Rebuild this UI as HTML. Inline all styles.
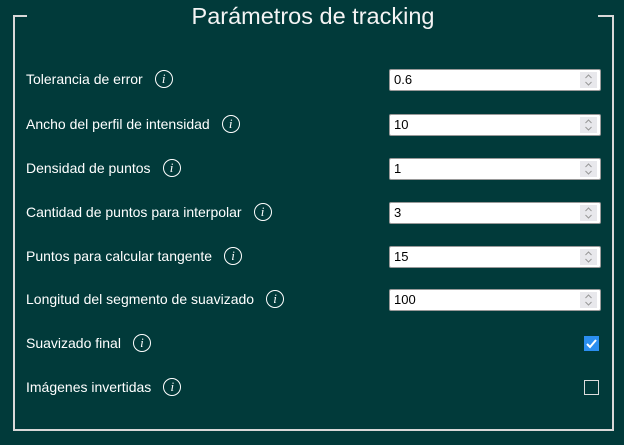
<!DOCTYPE html>
<html><head><meta charset="utf-8"><style>
body{margin:0;width:624px;height:445px;background:#013a3a;font-family:"Liberation Sans",sans-serif;color:#fff;position:relative;overflow:hidden}
.fs{position:absolute;left:13px;top:15px;width:597px;height:414px;border:2px solid #d8d8d8;border-top:none}
.tl{position:absolute;left:13px;top:15px;width:14px;height:2px;background:#d8d8d8}
.tr{position:absolute;left:598px;top:15px;width:14px;height:2px;background:#d8d8d8}
.title{position:absolute;left:0;width:626px;top:3px;text-align:center;font-size:23.5px;color:#f4f4f4}
.row{position:absolute;left:26px;height:20px;display:flex;align-items:center;font-size:14px}
.i{display:inline-block;width:16px;height:16px;border:1.5px solid #fff;border-radius:50%;margin-left:12px;font-family:"Liberation Serif",serif;font-style:italic;font-size:13px;text-align:center;line-height:16px}
.in{position:absolute;left:389px;height:20px;background:#fff;border:1px solid #999;border-radius:2px;color:#000;font-size:13px;line-height:20px;padding-left:4px;width:206px}
.sp{position:absolute;right:3px;top:2px;width:17px;height:16px;background:#e8e8ec}
.cb{position:absolute;left:584px;width:13px;height:13px;border:1.5px solid #ddd}
.ck{background:#2b8ef0;border-color:#2b8ef0}
</style></head><body>
<div class="fs"></div><div class="tl"></div><div class="tr"></div>
<div class="title">Parámetros de tracking</div>
<div class="row" style="top:69px">Tolerancia de error<span class="i">i</span></div>
<div class="row" style="top:114px">Ancho del perfil de intensidad<span class="i">i</span></div>
<div class="row" style="top:158px">Densidad de puntos<span class="i">i</span></div>
<div class="row" style="top:202px">Cantidad de puntos para interpolar<span class="i">i</span></div>
<div class="row" style="top:246px">Puntos para calcular tangente<span class="i">i</span></div>
<div class="row" style="top:289px">Longitud del segmento de suavizado<span class="i">i</span></div>
<div class="row" style="top:333px">Suavizado final<span class="i">i</span></div>
<div class="row" style="top:377px">Imágenes invertidas<span class="i">i</span></div>
<div class="in" style="top:69px">0.6<svg class="sp" viewBox="0 0 17 16"><path d="M5.5 6l3-3 3 3M5.5 10l3 3 3-3" stroke="#999" stroke-width="1" fill="none"/></svg></div>
<div class="in" style="top:114px">10<svg class="sp" viewBox="0 0 17 16"><path d="M5.5 6l3-3 3 3M5.5 10l3 3 3-3" stroke="#999" stroke-width="1" fill="none"/></svg></div>
<div class="in" style="top:158px">1<svg class="sp" viewBox="0 0 17 16"><path d="M5.5 6l3-3 3 3M5.5 10l3 3 3-3" stroke="#999" stroke-width="1" fill="none"/></svg></div>
<div class="in" style="top:202px">3<svg class="sp" viewBox="0 0 17 16"><path d="M5.5 6l3-3 3 3M5.5 10l3 3 3-3" stroke="#999" stroke-width="1" fill="none"/></svg></div>
<div class="in" style="top:246px">15<svg class="sp" viewBox="0 0 17 16"><path d="M5.5 6l3-3 3 3M5.5 10l3 3 3-3" stroke="#999" stroke-width="1" fill="none"/></svg></div>
<div class="in" style="top:289px">100<svg class="sp" viewBox="0 0 17 16"><path d="M5.5 6l3-3 3 3M5.5 10l3 3 3-3" stroke="#999" stroke-width="1" fill="none"/></svg></div>
<div class="cb ck" style="top:336px"><svg width="13" height="13" viewBox="0 0 13 13"><path d="M2 7l3 3 6-7" stroke="#fff" stroke-width="2" fill="none"/></svg></div>
<div class="cb" style="top:380px"></div>
</body></html>
